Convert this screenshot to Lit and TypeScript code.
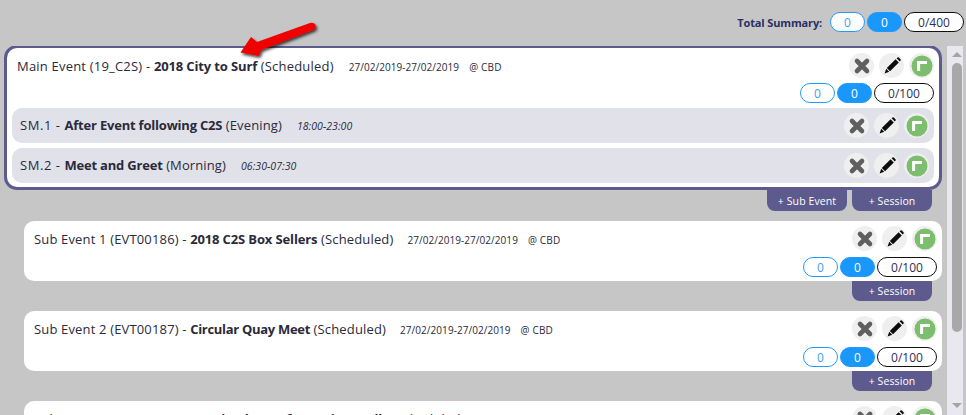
import { LitElement, html, css, svg } from "lit";
import { customElement } from "lit/decorators.js";

const xIcon = svg`<path d="M6 6 L16 16 M16 6 L6 16" stroke="#5f5f5f" stroke-width="4.6" stroke-linecap="round" fill="none"/>`;
const pencilIcon = svg`<path d="M14.6 4.2 L17.8 7.4 L9 16.2 L5.8 13 Z M15.6 3.2 L16.6 2.4 Q17.2 2 17.8 2.5 L19.5 4.2 Q20 4.8 19.6 5.4 L18.8 6.4 Z M5.2 13.8 L8.2 16.8 L3.6 18.4 Z" fill="#0c0c0c"/>`;

@customElement("app-root")
export class AppRoot extends LitElement {
  static styles = css`
    :host { display: block; width: 966px; height: 415px; overflow: hidden; background: #c6c6c6; position: relative; font-family: "Open Sans", sans-serif; color: #2a2a3a; }
    .top { height: 46px; box-sizing: border-box; display: flex; justify-content: flex-end; align-items: flex-start; padding: 12px 2px 0 0; gap: 8px; }
    .total { font-size: 11px; font-weight: 700; color: #2b2f63; line-height: 21px; letter-spacing: -0.15px; }
    .pills { display: flex; gap: 2px; }
    .pill { width: 35px; height: 20px; box-sizing: border-box; border-radius: 10px; border: 1px solid #1f9bff; background: #fff; color: #3f9eef; font-size: 12px; display: flex; align-items: center; justify-content: center; }
    .pill.blue { background: #1a97fb; color: #fff; }
    .pill.ratio { width: 60px; border-color: #111; color: #2c2f55; }
    .body { display: flex; height: 369px; }
    .scroller { width: 947px; overflow: hidden; padding-left: 4px; box-sizing: border-box; }
    .main { width: 938px; height: 145px; margin-top: -1px; box-sizing: border-box; background: #fff; border: 3px solid #5d5a8e; border-radius: 13px; padding: 0 5px; }
    .head { display: flex; justify-content: space-between; }
    .title { font-size: 13px; white-space: nowrap; line-height: 18px; display: flex; align-items: baseline; letter-spacing: 0.2px; }
    .title b { font-weight: 700; letter-spacing: -0.13px; }
    .date { font-size: 10px; margin-left: 15px; letter-spacing: 0.05px; }
    .loc { font-size: 10px; margin-left: 10px; letter-spacing: 0.2px; }
    .tm { font-size: 10.5px; font-style: italic; margin-left: 15px; letter-spacing: 0.05px; }
    .icons { display: flex; gap: 5px; }
    .ic { width: 25px; height: 25px; border-radius: 50%; background: #efefef; display: flex; align-items: center; justify-content: center; }
    .ic svg { width: 22px; height: 22px; display: block; }
    .main .head { padding: 5px 0 0 5px; height: 35px; box-sizing: border-box; }
    .main .head .title { padding-top: 4px; }
    .main .pills { justify-content: flex-end; }
    .subs { margin-top: 5px; display: flex; flex-direction: column; gap: 5px; }
    .sub { height: 35px; background: #e1e1ea; border-radius: 10px; display: flex; justify-content: space-between; align-items: center; padding: 0 5px 0 8px; }
    .sub .pre { letter-spacing: 0.55px; }
    .sub b { letter-spacing: -0.2px; }
    .sub .tail { letter-spacing: 0.12px; }
    .actions { width: 928px; display: flex; justify-content: flex-end; gap: 5px; }
    .btn { width: 80px; height: 21px; background: #5d5a8e; color: #fff; font-size: 10.5px; letter-spacing: 0.1px; border-radius: 0 0 8px 8px; display: flex; align-items: center; justify-content: center; }
    .group { margin-left: 20px; width: 918px; padding-top: 10px; }
    .card { background: #fff; border-radius: 10px; height: 60px; box-sizing: border-box; padding: 5px 5px 0 10px; }
    .card .head { height: 31px; }
    .card .title { padding-top: 4px; letter-spacing: 0.16px; }
    .card .title b { letter-spacing: -0.13px; }
    .card .title b.tight { letter-spacing: -0.3px; }
    .card .date { margin-left: 14px; letter-spacing: 0.05px; }
    .card .pills { justify-content: flex-end; }
    .group .btn { height: 20px; }
    .group .actions { width: 908px; }
    .bar { width: 16px; margin-right: 3px; background: #e8e8ee; position: relative; }
    .bar .thumb { position: absolute; left: 5px; top: 17px; width: 10px; height: 269px; border-radius: 5px; background: #a8a8a8; }
    .bar .up, .bar .down { position: absolute; left: 5px; width: 0; height: 0; border-left: 5px solid transparent; border-right: 5px solid transparent; }
    .bar .up { top: 6px; border-bottom: 5px solid #a4a4a4; }
    .bar .down { bottom: 7px; border-top: 5px solid #a4a4a4; }
    .arrow { position: absolute; left: 230px; top: 12px; width: 95px; height: 50px; pointer-events: none; }
  `;

  icons() {
    return html`<div class="icons">
      <div class="ic"><svg viewBox="0 0 22 22">${xIcon}</svg></div>
      <div class="ic"><svg viewBox="0 0 22 22">${pencilIcon}</svg></div>
      <div class="ic"><svg viewBox="0 0 22 22"><circle cx="11" cy="11" r="10.5" fill="#7dbd6e"/><path d="M7.6 16 V7.6 H16" stroke="#fff" stroke-width="3" fill="none"/></svg></div>
    </div>`;
  }

  pills(t: string) {
    return html`<div class="pills"><div class="pill">0</div><div class="pill blue">0</div><div class="pill ratio">${t}</div></div>`;
  }

  subEvent(pre: string, name: string, tight = false) {
    return html`<div class="group">
      <div class="card">
        <div class="head">
          <div class="title"><span>${pre} -&nbsp;</span><b class=${tight ? "tight" : ""}>${name}</b><span>&nbsp;(Scheduled)</span><span class="date">27/02/2019-27/02/2019</span><span class="loc">@ CBD</span></div>
          ${this.icons()}
        </div>
        ${this.pills("0/100")}
      </div>
      <div class="actions"><div class="btn">+ Session</div></div>
    </div>`;
  }

  render() {
    return html`
      <div class="top"><div class="total">Total Summary:</div>${this.pills("0/400")}</div>
      <div class="body">
        <div class="scroller">
          <div class="main">
            <div class="head">
              <div class="title"><span>Main Event (19_C2S) -&nbsp;</span><b>2018 City to Surf</b><span>&nbsp;(Scheduled)</span><span class="date">27/02/2019-27/02/2019</span><span class="loc">@ CBD</span></div>
              ${this.icons()}
            </div>
            ${this.pills("0/100")}
            <div class="subs">
              <div class="sub"><div class="title"><span class="pre">SM.1 -&nbsp;</span><b>After Event following C2S</b><span class="tail">&nbsp;(Evening)</span><span class="tm">18:00-23:00</span></div>${this.icons()}</div>
              <div class="sub"><div class="title"><span class="pre">SM.2 -&nbsp;</span><b>Meet and Greet</b><span class="tail">&nbsp;(Morning)</span><span class="tm">06:30-07:30</span></div>${this.icons()}</div>
            </div>
          </div>
          <div class="actions"><div class="btn">+ Sub Event</div><div class="btn">+ Session</div></div>
          ${this.subEvent("Sub Event 1 (EVT00186)", "2018 C2S Box Sellers")}
          ${this.subEvent("Sub Event 2 (EVT00187)", "Circular Quay Meet", true)}
          ${this.subEvent("Sub Event 3 (EVT00188)", "Martin Place Information Stalls")}
        </div>
        <div class="bar"><div class="up"></div><div class="thumb"></div><div class="down"></div></div>
      </div>
      <svg class="arrow" viewBox="0 0 95 50">
        <defs><filter id="s" x="-20%" y="-30%" width="140%" height="160%"><feDropShadow dx="1.5" dy="2" stdDeviation="1.4" flood-color="#000" flood-opacity="0.75"/></filter></defs>
        <path d="M10.5 40.5 L21 25 L27 30 L80 11 Q84 10 85.5 13 Q86.5 16.5 83 18 L31 38 L29 44 Z" fill="#f00000" filter="url(#s)"/>
      </svg>
    `;
  }
}
